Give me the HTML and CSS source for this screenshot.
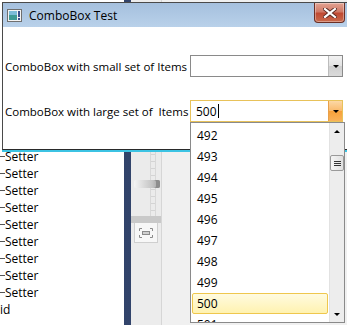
FILE: index.html
```html
<!DOCTYPE html>
<html>
<head>
<meta charset="utf-8">
<link rel="stylesheet" href="styles.css">
</head>
<body>
<div class="desk">
  <div class="tree">
    <div class="row"><span class="conn"></span>Setter</div>
    <div class="row"><span class="conn"></span>Setter</div>
    <div class="row"><span class="conn"></span>Setter</div>
    <div class="row"><span class="conn"></span>Setter</div>
    <div class="row"><span class="conn"></span>Setter</div>
    <div class="row"><span class="conn"></span>Setter</div>
    <div class="row"><span class="conn"></span>Setter</div>
    <div class="row"><span class="conn"></span>Setter</div>
    <div class="row"><span class="conn"></span>Setter</div>
    <div class="row">id</div>
  </div>
  <div class="splitter"></div>
  <div class="zoompanel">
    <div class="track">
      <div class="rail"></div>
      <div class="thumb"></div>
    </div>
    <div class="zbar"></div>
    <div class="fitbtn">
      <svg width="14" height="10" viewBox="0 0 14 10">
        <g fill="none" stroke="#8a8a8a" stroke-width="1">
          <path d="M0.5 3V0.5H3M11 0.5H13.5V3M13.5 7V9.5H11M3 9.5H0.5V7"/>
          <rect x="3.5" y="3.5" width="7" height="3" fill="#cfcfcf"/>
        </g>
      </svg>
    </div>
  </div>
  <div class="rest"></div>
</div>

<div class="window">
  <div class="titlebar">
    <svg class="appicon" width="15" height="13" viewBox="0 0 15 13">
      <rect x="0.5" y="0.5" width="14" height="12" fill="#f4f4f4" stroke="#6f6f6f"/>
      <rect x="2" y="2" width="8" height="9" fill="#3f9a94"/>
      <rect x="2" y="2" width="8" height="4" fill="#7cbcd8"/>
      <rect x="11" y="2" width="2" height="6" fill="#3b4f8a"/>
      <rect x="11" y="9" width="2" height="2" fill="#3b4f8a"/>
    </svg>
    <span class="title">ComboBox Test</span>
    <div class="close">
      <svg width="14" height="10" viewBox="0 0 14 10">
        <path d="M2 1L12 9M12 1L2 9" stroke="#5a2a22" stroke-width="4" stroke-linecap="square"/>
        <path d="M2 1L12 9M12 1L2 9" stroke="#ffffff" stroke-width="2.2" stroke-linecap="square"/>
      </svg>
    </div>
  </div>
  <div class="client">
    <div class="field">
      <span class="label">ComboBox with small set of Items</span>
      <div class="combo">
        <div class="cbtext"></div>
        <div class="cbbtn"><span class="arrow"></span></div>
      </div>
    </div>
    <div class="field">
      <span class="label">ComboBox with large set of&nbsp; Items</span>
      <div class="combo active">
        <div class="cbtext">500<span class="caret"></span></div>
        <div class="cbbtn"><span class="arrow"></span></div>
      </div>
    </div>
  </div>
</div>

<div class="popup">
  <div class="items">
    <div class="item">492</div>
    <div class="item">493</div>
    <div class="item">494</div>
    <div class="item">495</div>
    <div class="item">496</div>
    <div class="item">497</div>
    <div class="item">498</div>
    <div class="item">499</div>
    <div class="item sel">500</div>
    <div class="item">501</div>
  </div>
  <div class="vscroll">
    <div class="sarrow up"></div>
    <div class="sthumb"><span></span><span></span><span></span></div>
    <div class="sspace"></div>
    <div class="sarrow down"></div>
  </div>
</div>
</body>
</html>
```
FILE: styles.css
```css
html, body {
  margin: 0;
  padding: 0;
}
body {
  width: 347px;
  height: 325px;
  overflow: hidden;
  position: relative;
  font-family: "Open Sans", "Noto Sans", sans-serif;
  font-size: 11.5px;
  color: #000;
  background: #f0f0f0;
}
.desk {
  display: flex;
  height: 325px;
}
.tree {
  width: 124px;
  background: #fff;
  padding-top: 148px;
  box-sizing: border-box;
}
.row {
  height: 17px;
  line-height: 17px;
  display: flex;
  align-items: center;
  white-space: nowrap;
  font-size: 12px;
}
.conn {
  width: 5px;
  border-top: 1px solid #555;
}
.splitter {
  width: 7px;
  background: #2b3c60;
  background-image: radial-gradient(#3a4d76 0.6px, transparent 0.8px);
  background-size: 2px 2px;
}
.zoompanel {
  width: 30px;
  background: #ececec;
  border-right: 1px solid #d6d6d6;
  display: flex;
  flex-direction: column;
  align-items: center;
}
.track {
  height: 68px;
  width: 30px;
  position: relative;
  margin-top: 148px;
  background: #ebebeb;
}
.rail {
  position: absolute;
  left: 19px;
  top: 0;
  width: 4px;
  height: 68px;
  border-left: 1px solid #d8d8d8;
  border-right: 1px solid #d8d8d8;
  background: repeating-linear-gradient(to bottom, transparent 0 6px, #d4d4d4 6px 7px);
}
.thumb {
  position: absolute;
  left: 3px;
  top: 32px;
  width: 26px;
  height: 8px;
  background: linear-gradient(to right, #f4f4f4, #c4c4c4 70%, #a0a0a0);
  border-radius: 2px;
  box-shadow: inset -4px 0 0 #8d8d8d;
}
.zbar {
  width: 30px;
  height: 7px;
  background: #c9c9c9;
}
.fitbtn {
  width: 22px;
  height: 19px;
  background: #f7f7f7;
  border: 1px solid #cfcfcf;
  border-top: 0;
  display: flex;
  align-items: center;
  justify-content: center;
}
.rest {
  flex: 1;
  background: #f0f0f0;
}

/* Window */
.window {
  position: absolute;
  left: 2px;
  top: 2px;
  width: 350px;
  height: 146px;
  border-top: 1px solid #4a4a4a;
  border-left: 1px solid #4a4a4a;
  border-bottom: 1px solid #2a2a2a;
  box-shadow: 0 2px 0 #3cc3e3;
  background: #fff;
}
.titlebar {
  height: 24px;
  display: flex;
  align-items: center;
  background: linear-gradient(to bottom, #a5c0de, #b9d1ea);
  position: relative;
}
.appicon {
  margin-left: 4px;
  margin-right: 7px;
}
.title {
  font-size: 12px;
  color: #000;
}
.close {
  position: absolute;
  left: 311px;
  top: 0;
  width: 29px;
  height: 19px;
  border: 1px solid #6b2f25;
  border-top: 0;
  border-radius: 0 0 4px 4px;
  background: linear-gradient(to bottom, #e3a393, #d07a67 45%, #c04a33 55%, #c96a4c);
  box-shadow: inset 0 0 0 1px rgba(255,255,255,0.35);
  display: flex;
  align-items: center;
  justify-content: center;
}
.client {
  padding-top: 28px;
  padding-left: 2px;
  display: flex;
  flex-direction: column;
  gap: 23px;
}
.field {
  display: flex;
  align-items: center;
  height: 22px;
}
.label {
  width: 185px;
  white-space: nowrap;
}
.combo {
  width: 153px;
  height: 22px;
  box-sizing: border-box;
  border: 1px solid #8a8a8a;
  display: flex;
  background: #fff;
}
.combo.active {
  border-color: #e8c25a;
}
.cbtext {
  flex: 1;
  padding-left: 5px;
  display: flex;
  align-items: center;
  font-size: 12px;
}
.caret {
  width: 1px;
  height: 14px;
  background: #000;
  margin-left: 1px;
}
.cbbtn {
  width: 13px;
  background: linear-gradient(to bottom, #f2f2f2, #e2e2e2 50%, #cfcfcf 51%, #dadada);
  border-left: 1px solid #bcbcbc;
  display: flex;
  align-items: center;
  justify-content: center;
}
.active .cbbtn {
  background: linear-gradient(to bottom, #fcd8a6, #f9b96b 50%, #f7a13a 51%, #f8b25a);
  border-left-color: #e8a04a;
}
.arrow {
  width: 0;
  height: 0;
  border-left: 3px solid transparent;
  border-right: 3px solid transparent;
  border-top: 3px solid #000;
}

/* Popup */
.popup {
  position: absolute;
  left: 190px;
  top: 122px;
  width: 155px;
  height: 201px;
  box-sizing: border-box;
  border: 1px solid #8a8a8a;
  background: #fff;
  display: flex;
}
.items {
  flex: 1;
  padding: 2px 1px 0 1px;
  overflow: hidden;
}
.item {
  height: 21px;
  line-height: 21px;
  padding-left: 5px;
  font-size: 12px;
  box-sizing: border-box;
}
.item.sel {
  border: 1px solid #efc74d;
  border-radius: 2px;
  background: linear-gradient(to bottom, #fffbe0, #fff2b0);
  line-height: 19px;
  padding-left: 4px;
}
.vscroll {
  width: 14px;
  background: #ededed;
  border-left: 1px solid #e2e2e2;
  display: flex;
  flex-direction: column;
}
.sarrow {
  height: 16px;
  display: flex;
  align-items: center;
  justify-content: center;
}
.sarrow.up::before {
  content: "";
  border-left: 3px solid transparent;
  border-right: 3px solid transparent;
  border-bottom: 3px solid #000;
}
.sarrow.down::before {
  content: "";
  border-left: 3px solid transparent;
  border-right: 3px solid transparent;
  border-top: 3px solid #000;
}
.sthumb {
  height: 16px;
  margin: 16px 0 0 0;
  border: 1px solid #9a9a9a;
  border-radius: 2px;
  background: linear-gradient(to right, #f5f5f5, #e0e0e0);
  display: flex;
  flex-direction: column;
  align-items: center;
  justify-content: center;
  gap: 1px;
  box-sizing: border-box;
}
.sthumb span {
  width: 7px;
  height: 1px;
  background: #333;
}
.sspace {
  flex: 1;
}
```
